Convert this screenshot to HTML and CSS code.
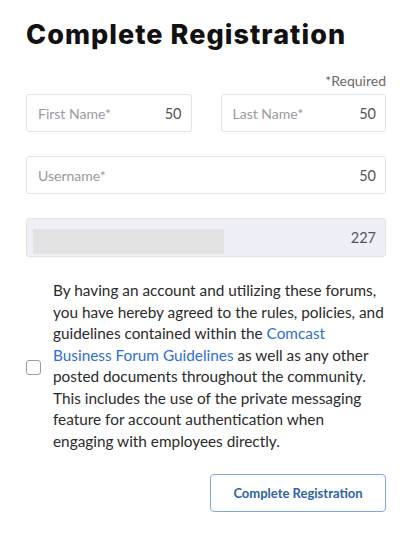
FILE: index.html
```html
<!DOCTYPE html>
<html>
<head>
<meta charset="utf-8">
<link rel="stylesheet" href="styles.css">
</head>
<body>
<div class="page">
  <h1 class="title">Complete Registration</h1>
  <div class="required">*Required</div>
  <div class="row">
    <div class="field"><span class="ph">First Name*</span><span class="count">50</span></div>
    <div class="field"><span class="ph">Last Name*</span><span class="count">50</span></div>
  </div>
  <div class="field full"><span class="ph">Username*</span><span class="count">50</span></div>
  <div class="field disabled"><span class="blank"></span><span class="count">227</span></div>
  <div class="agree">
    <span class="checkbox"></span>
    <p class="terms">By having an account and utilizing these forums, you have hereby agreed to the rules, policies, and guidelines contained within the <a class="link" href="#">Comcast Business Forum Guidelines</a> as well as any other posted documents throughout the community. This includes the use of the private messaging feature for account authentication when engaging with employees directly.</p>
  </div>
  <div class="actions">
    <button class="btn">Complete Registration</button>
  </div>
</div>
</body>
</html>
```
FILE: styles.css
```css
* { box-sizing: border-box; }
html, body { margin: 0; padding: 0; background: #fff; }
body { font-family: Lato, "Open Sans", sans-serif; color: #2b2b2b; }
.page { padding: 18px 26px 0 26px; width: 412px; }
.title {
  margin: 0;
  font-family: Inter, "Open Sans", sans-serif;
  font-weight: 800;
  font-size: 27px;
  line-height: 34px;
  color: #111;
  letter-spacing: 1.05px;
}
.required {
  margin-top: 20px;
  text-align: right;
  font-size: 14px;
  line-height: 18px;
  color: #6b6b6b;
}
.row { display: flex; gap: 29px; margin-top: 4px; }
.row .field { flex: 1; }
.field {
  height: 38px;
  border: 1px solid #e3e4ea;
  border-radius: 3px;
  display: flex;
  align-items: center;
  justify-content: space-between;
  padding: 0 9px 0 11px;
  font-size: 14px;
}
.field.full { margin-top: 24px; }
.field.disabled { margin-top: 24px; background: #eeeff7; padding-left: 6px; height: 39px; }
.ph { color: #9a9a9f; }
.count { color: #555; font-size: 14.5px; }
.blank { width: 191px; height: 25px; background: #e3e3e3; margin-top: 7px; }
.agree { display: flex; align-items: center; margin-top: 23px; gap: 12px; }
.checkbox {
  flex: none;
  width: 15px;
  height: 15px;
  border: 1.5px solid #9c9ca4;
  border-radius: 3px;
  margin-top: 3px;
}
.terms {
  margin: 0;
  font-size: 15.35px;
  line-height: 21.5px;
  color: #2b2b2b;
}
.link { color: #2f6fd6; text-decoration: none; }
.actions { display: flex; justify-content: flex-end; margin-top: 22px; }
.btn {
  width: 176px;
  height: 38px;
  background: #fff;
  border: 1.5px solid #7fa9e3;
  border-radius: 4px;
  font-family: Lato, sans-serif;
  font-weight: 700;
  font-size: 13px;
  color: #2d64a6;
}
```
